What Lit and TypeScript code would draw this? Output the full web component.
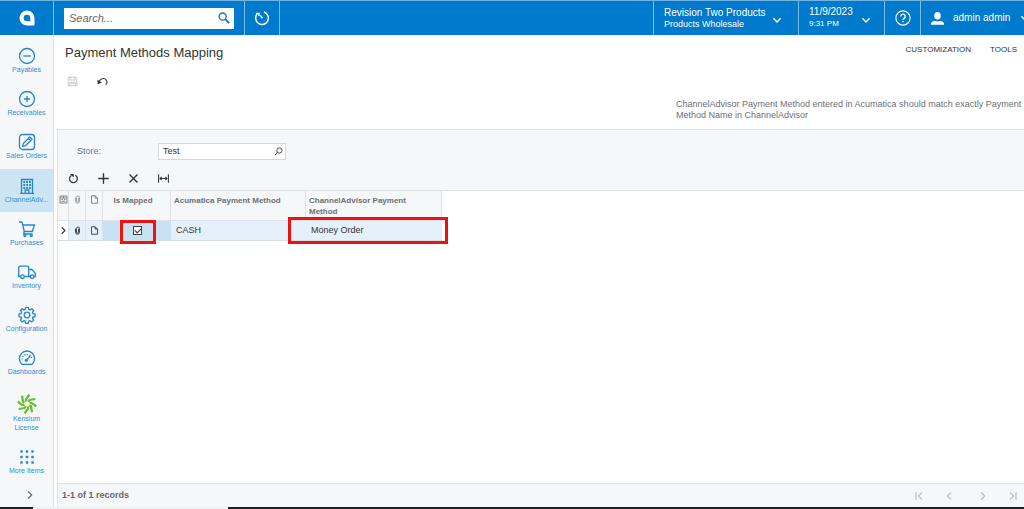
import { LitElement, html, css, svg, TemplateResult } from "lit";
import { customElement, property, state } from "lit/decorators.js";
import { classMap } from "lit/directives/class-map.js";

const shapes: Record<string, TemplateResult> = {
  minus: svg`<circle cx="9" cy="9" r="7.5"/><path d="M5.2 9h7.6"/>`,
  plus: svg`<circle cx="9" cy="9" r="7.5"/><path d="M6 9h6M9 6v6"/>`,
  edit: svg`<rect x="1.5" y="1.5" width="15" height="15" rx="3"/><path d="M4.6 13.4l.8-3 6.4-6.4 2.2 2.2-6.4 6.4zM10.4 5.4l2.2 2.2"/>`,
  building: svg`<path d="M3.5 16V2.5h11V16M2 16.3h14"/><path stroke-width="1.8" d="M5.3 5h1.8M8.2 5H10M11.1 5h1.8M5.3 8h1.8M8.2 8H10M11.1 8h1.8M5.3 11h1.8M8.2 11H10M11.1 11h1.8"/><path d="M7.2 16v-3h3.6v3"/>`,
  cart: svg`<path d="M1 2h3l2.3 9.5h8L16.4 5H4.8"/><path d="M6.3 11.5L5.6 14h9"/><circle cx="6.9" cy="15.6" r="1"/><circle cx="13.3" cy="15.6" r="1"/>`,
  truck: svg`<path d="M2.5 13.5H.7v-9c0-.9.4-1.3 1.3-1.3h7.4c.9 0 1.3.4 1.3 1.3v9H6.5M10.7 6.5h3.1l3.5 3.7v3.3h-1.2M10.7 13.5h1.4"/><circle cx="4.5" cy="13.7" r="1.8"/><circle cx="14.1" cy="13.7" r="1.8"/>`,
  gear: svg`<circle cx="9" cy="9" r="2.8"/><path stroke-linejoin="round" d="M7.7 1.3h2.6l.4 2.1 1.3.5 1.8-1.2 1.8 1.8-1.2 1.8.5 1.3 2.1.4v2.6l-2.1.4-.5 1.3 1.2 1.8-1.8 1.8-1.8-1.2-1.3.5-.4 2.1H7.7l-.4-2.1-1.3-.5-1.8 1.2-1.8-1.8 1.2-1.8-.5-1.3-2.1-.4V8l2.1-.4.5-1.3-1.2-1.8 1.8-1.8 1.8 1.2 1.3-.5z"/>`,
  gauge: svg`<path d="M4 15.3a7.6 7.6 0 1 1 10 0z"/><path d="M8.2 11.5l4.3-5"/><circle cx="8.3" cy="11.3" r="1"/><path stroke-dasharray="1 1.5" d="M4.2 10.5a4.8 4.8 0 0 1 9.6-.5"/>`,
  grid: svg`<g fill="currentColor" stroke="none">${[3.5, 9, 14.5].map((y) => [3.5, 9, 14.5].map((x) => svg`<rect x=${x - 1.2} y=${y - 1.2} width="2.4" height="2.4" rx=".4"/>`))}</g>`,
  right: svg`<path stroke-width="2.2" d="M5.5 2.5L12 9l-6.5 6.5"/>`,
  left: svg`<path stroke-width="2.2" d="M12.5 2.5L6 9l6.5 6.5"/>`,
  down: svg`<path stroke-width="2.6" d="M2.5 6L9 12.5 15.5 6"/>`,
  first: svg`<path stroke-width="2" d="M3.5 2v14M14.5 2.5L8 9l6.5 6.5"/>`,
  last: svg`<path stroke-width="2" d="M14.5 2v14M3.5 2.5L10 9l-6.5 6.5"/>`,
  search: svg`<circle cx="7" cy="6.8" r="5.3" stroke-width="2"/><path stroke-width="2.8" d="M10.8 10.6l6 6"/>`,
  lookup: svg`<circle cx="10.8" cy="7" r="5.3" stroke-width="1.7"/><path stroke-width="2" d="M7 10.8L2 16"/>`,
  timer: svg`<path stroke-width="1.6" d="M11.2 2.2a7.2 7.2 0 1 1-7.6 2.1M2.2 3.8h3.4v3M7 6l2.6 3.2"/>`,
  help: svg`<circle cx="9" cy="9" r="8"/><path stroke-width="1.5" d="M6.5 7.2a2.5 2.5 0 1 1 3.7 2.2C9.3 9.9 9 10.2 9 11.1M9 12.3v1.5"/>`,
  user: svg`<g fill="currentColor" stroke="none"><ellipse cx="9" cy="5.8" rx="3.9" ry="4.5"/><path d="M1 16.5c0-3 2-4.300 5-4.900 1.800 1.200 4.200 1.200 6 0 3 .6 5 1.900 5 4.900z"/></g>`,
  save: svg`<path d="M2 2h12.5L16 3.5V16H2zM5 2v4.500h8V2M4.500 16v-6h9v6M6.500 12.500h5"/>`,
  undo: svg`<path stroke-width="1.7" d="M2.500 10.500C5 3.500 12 2.500 15 6.500c2 2.700 1.200 6-.8 7.800"/><path fill="currentColor" stroke="none" d="M.5 6l.8 7.500L8 10.800z"/>`,
  refresh: svg`<path stroke-width="2" d="M12 3.800a6.400 6.400 0 1 1-6.500.2"/><path fill="currentColor" stroke="none" d="M3 1.500h6.500v6z"/>`,
  add: svg`<path stroke-width="2.2" d="M9 .5v17M.5 9h17"/>`,
  remove: svg`<path stroke-width="2.2" d="M2.500 2.500l13 13M15.500 2.500l-13 13"/>`,
  fit: svg`<path stroke-width="1.7" d="M1 2v14M17 2v14M3.500 9h11M6 6.300L3.300 9 6 11.700M12 6.300L14.700 9 12 11.700"/>`,
  clip: svg`<path stroke-width="1.8" d="M5 5v7.500a4 4 0 0 0 8 0V5a3 3 0 0 0-6 0v7a1.900 1.900 0 0 0 3.900 0V5.500"/>`,
  note: svg`<path stroke-width="1.7" d="M3 1.500h7.500L15 6v10.500H3zM10.300 1.500V6.200H15"/>`,
  settings: svg`<path stroke-width="1.7" d="M2 2h14v14H2zM2 6h14M5 9h3M10 9h3M5 12.500h8M9 2v4"/>`,
};

@customElement("ui-icon")
export class UiIcon extends LitElement {
  @property() name = "";

  static styles = css`
    :host { display: inline-flex; width: 18px; height: 18px; flex: none; }
    .shape { width: 100%; height: 100%; fill: none; stroke: currentColor; stroke-width: 1.3; }
  `;

  render() {
    return html`<svg class="shape" viewBox="0 0 18 18" aria-hidden="true">${shapes[this.name]}</svg>`;
  }
}

@customElement("app-header")
export class AppHeader extends LitElement {
  static styles = css`
    :host { display: block; font: 10px/12px "Liberation Sans", Arial, sans-serif; color: #fff; }
    .bar { display: flex; height: 35px; box-sizing: border-box; background: #007acc; border-top: 1px solid #6fb4e2; }
    .cell { display: flex; align-items: center; box-sizing: border-box; border: 0; border-left: 1px solid #7bbbe5; padding: 0; background: none; color: inherit; font: inherit; text-align: left; }
    .logo { width: 53px; justify-content: center; border-left: 0; }
    .mark { width: 16px; height: 16px; }
    .find { padding: 0 10px; }
    .field { display: flex; align-items: center; width: 170px; height: 21px; background: #fff; color: #1177bd; }
    .text { flex: 1; min-width: 0; border: 0; outline: 0; padding: 0 5px; background: none; font: italic 11px "Liberation Sans", Arial, sans-serif; color: #333; }
    .text::placeholder { color: #666; opacity: 1; }
    .go { display: flex; border: 0; background: none; padding: 0 4px; color: inherit; }
    .go ui-icon { width: 12px; height: 12px; }
    .recent { width: 36px; justify-content: center; border-right: 1px solid #7bbbe5; }
    .recent ui-icon, .help ui-icon { width: 16px; height: 16px; }
    .space { flex: 1; }
    .lines { display: flex; flex-direction: column; }
    .small { font-size: 9px; line-height: 10px; }
    .company { width: 145px; padding-left: 10px; gap: 6px; }
    .date { width: 86px; padding-left: 10px; gap: 8px; }
    .date .small { font-size: 8px; line-height: 12px; }
    .company ui-icon, .date ui-icon { width: 10px; height: 10px; margin-top: 4px; }
    .help { width: 36px; justify-content: center; }
    .account { width: 104px; padding-left: 9px; gap: 8px; overflow: hidden; white-space: nowrap; }
    .account ui-icon { width: 15px; height: 15px; }
    .account .more { width: 10px; height: 10px; margin-left: 2px; }
  `;

  render() {
    return html`
      <header class="bar">
        <div class="cell logo">
          <svg class="mark" viewBox="0 0 16 16" role="img" aria-label="Acumatica">
            <path fill="#fff" fill-rule="evenodd" d="M8 .5A7.5 7.5 0 0 1 15.5 8v7.5H8A7.5 7.5 0 0 1 8 .5zM8 4.700A3.300 3.300 0 1 0 8 11.300h3.300V8A3.300 3.300 0 0 0 8 4.700z"/>
          </svg>
        </div>
        <div class="cell find">
          <div class="field">
            <input class="text" type="search" placeholder="Search..." aria-label="Search" />
            <button class="go" aria-label="Run search"><ui-icon name="search"></ui-icon></button>
          </div>
        </div>
        <button class="cell recent" aria-label="Recently visited"><ui-icon name="timer"></ui-icon></button>
        <div class="space"></div>
        <button class="cell company">
          <span class="lines"><span>Revision Two Products</span><span class="small">Products Wholesale</span></span>
          <ui-icon name="down"></ui-icon>
        </button>
        <button class="cell date">
          <span class="lines"><span>11/9/2023</span><span class="small">9:31 PM</span></span>
          <ui-icon name="down"></ui-icon>
        </button>
        <button class="cell help" aria-label="Help"><ui-icon name="help"></ui-icon></button>
        <button class="cell account">
          <ui-icon name="user"></ui-icon><span>admin admin</span><ui-icon class="more" name="down"></ui-icon>
        </button>
      </header>
    `;
  }
}

@customElement("side-menu")
export class SideMenu extends LitElement {
  @state() private current = "ChannelAdv...";

  private items = [
    ["minus", "Payables"],
    ["plus", "Receivables"],
    ["edit", "Sales Orders"],
    ["building", "ChannelAdv..."],
    ["cart", "Purchases"],
    ["truck", "Inventory"],
    ["gear", "Configuration"],
    ["gauge", "Dashboards"],
    ["kensium", "Kensium License"],
    ["grid", "More Items"],
  ];

  static styles = css`
    :host { display: flex; width: 53px; flex: none; border-right: 1px solid #dcdfe2; background: #f5f7f9; font: 7px/9px "Liberation Sans", Arial, sans-serif; }
    .menu { display: flex; flex-direction: column; flex: 1; min-width: 0; padding-top: 4px; }
    .item { display: flex; flex-direction: column; align-items: center; flex: 1 0 auto; min-height: 43px; box-sizing: border-box; padding: 8px 6px 7px; color: #3190d2; text-decoration: none; text-align: center; }
    .current { background: #cce5f5; }
    .item ui-icon { color: #2586cc; }
    .star { width: 20px; height: 20px; margin-top: 1px; }
    .toggle { display: flex; align-items: center; justify-content: center; height: 24px; border: 0; padding: 0 0 0 6px; background: none; color: #666; }
    .toggle ui-icon { width: 10px; height: 10px; }
  `;

  private glyph(name: string) {
    if (name !== "kensium") return html`<ui-icon name=${name}></ui-icon>`;
    return html`
      <svg class="star" viewBox="-10 -10 20 20" aria-hidden="true">
        ${[0, 45, 90, 135, 180, 225, 270, 315].map(
          (turn) => svg`<path transform="rotate(${turn})" fill="none" stroke="#6cba2d" stroke-width="2.2" stroke-linejoin="round" d="M-.8-2.6L-1.2-4.4L2.3-9.4"/>`,
        )}
      </svg>
    `;
  }

  render() {
    return html`
      <nav class="menu" aria-label="Workspaces">
        ${this.items.map(
          ([icon, label]) => html`
            <a href="#" class=${classMap({ item: true, current: label === this.current })}
              @click=${(e: Event) => { e.preventDefault(); this.current = label; }}>
              ${this.glyph(icon)}<span>${label}</span>
            </a>
          `,
        )}
        <button class="toggle" aria-label="Expand menu"><ui-icon name="right"></ui-icon></button>
      </nav>
    `;
  }
}

@customElement("mapping-grid")
export class MappingGrid extends LitElement {
  @state() private rows = [{ mapped: true, method: "CASH", channel: "Money Order" }];

  static styles = css`
    :host { display: block; flex: 1; font: 9px/11px "Liberation Sans", Arial, sans-serif; color: #333; }
    .grid { border-collapse: separate; border-spacing: 0; table-layout: fixed; width: 384px; }
    .c1 { width: 11px; }
    .c2 { width: 17px; }
    .c3 { width: 68px; }
    .c4 { width: 135px; }
    .c5 { width: 136px; }
    th { height: 30px; box-sizing: border-box; padding: 4px 10px 0 3px; border: solid #dfe2e5; border-width: 0 1px 1px 0; background: #f5f7f9; color: #6d7074; font-size: 8px; line-height: 11px; text-align: left; vertical-align: top; }
    td { position: relative; height: 20px; box-sizing: border-box; padding: 0 5px; background: #e4f1fa; border-bottom: 1px solid #d3dfe8; }
    .icon { padding-left: 0; padding-right: 0; text-align: center; border-right: 1px solid #dfe2e5; line-height: 0; }
    .icon ui-icon { width: 9px; height: 9px; }
    .faint { color: #999; }
    .open { background: #fff; }
    .middle { text-align: center; }
    .active { background: #c8e2f4; }
    .check { appearance: none; display: block; width: 9px; height: 9px; box-sizing: border-box; margin: 0 auto; border: 1px solid #444; background: #fff; }
    .check:checked::before { content: ""; display: block; box-sizing: border-box; width: 6px; height: 4px; margin: 1px 0 0 1px; border: solid #333; border-width: 0 0 1px 1px; transform: rotate(-45deg); }
    .mark { position: absolute; border: 3px solid #ee1111; pointer-events: none; z-index: 1; }
    .tick { inset: -1px 15px -4px 17px; }
    .name { inset: -4px -6px -4px -18px; }
  `;

  render() {
    return html`
      <table class="grid">
        <colgroup><col class="c1" /><col class="c2" /><col class="c2" /><col class="c3" /><col class="c4" /><col class="c5" /></colgroup>
        <thead>
          <tr>
            <th class="icon"><ui-icon name="settings"></ui-icon></th>
            <th class="icon faint"><ui-icon name="clip"></ui-icon></th>
            <th class="icon"><ui-icon name="note"></ui-icon></th>
            <th class="middle">Is Mapped</th>
            <th>Acumatica Payment Method</th>
            <th>ChannelAdvisor Payment Method</th>
          </tr>
        </thead>
        <tbody>
          ${this.rows.map(
            (row) => html`
              <tr>
                <td class="icon open"><ui-icon name="right"></ui-icon></td>
                <td class="icon"><ui-icon name="clip"></ui-icon></td>
                <td class="icon"><ui-icon name="note"></ui-icon></td>
                <td class="active"><input class="check" type="checkbox" aria-label="Is Mapped" .checked=${row.mapped} /><span class="mark tick"></span></td>
                <td>${row.method}</td>
                <td>${row.channel}<span class="mark name"></span></td>
              </tr>
            `,
          )}
        </tbody>
      </table>
    `;
  }
}

@customElement("app-root")
export class AppRoot extends LitElement {
  static styles = css`
    :host { display: flex; flex-direction: column; height: 100vh; overflow: hidden; background: #fff; font: 9px/11px "Liberation Sans", Arial, sans-serif; color: #333; }
    .body { display: flex; flex: 1; min-height: 0; }
    .page { display: flex; flex-direction: column; flex: 1; min-width: 0; padding-left: 3px; }
    .top { display: flex; justify-content: space-between; padding: 9px 7px 0 8px; }
    .title { margin: 0; font-size: 13px; line-height: 17px; font-weight: 400; }
    .links { display: flex; gap: 19px; font-size: 8px; }
    .button { display: flex; align-items: center; border: 0; padding: 0; background: none; font: inherit; color: inherit; }
    .links .button { height: 11px; }
    .tools { display: flex; gap: 19px; padding: 15px 10px 0; }
    .tools ui-icon { width: 11px; height: 11px; }
    .off { color: #bbb; }
    .note { align-self: flex-end; width: 347px; margin: 12px 1px 8px 0; color: #6d7074; }
    .panel { display: flex; flex-direction: column; flex: 1; border: solid #dfe2e5; border-width: 1px 0 0 1px; }
    .filter { background: #f5f7f9; border-bottom: 1px solid #dfe2e5; }
    .store { display: flex; align-items: center; padding: 13px 19px 0; }
    .label { width: 81px; color: #777; }
    .lookup { display: flex; align-items: center; width: 128px; height: 17px; box-sizing: border-box; border: 1px solid #d5d8db; background: #fff; }
    .value { flex: 1; min-width: 0; border: 0; outline: 0; padding: 0 4px; background: none; font: inherit; color: #333; }
    .lookup .button { padding: 0 2px; }
    .lookup ui-icon { width: 9px; height: 9px; }
    .actions { display: flex; gap: 19px; padding: 13px 10px 6px; }
    .actions ui-icon { width: 11px; height: 11px; }
    .foot { display: flex; align-items: center; justify-content: space-between; height: 24px; box-sizing: border-box; padding: 0 6px 0 4px; border-top: 1px solid #dfe2e5; background: #f5f7f9; font-weight: 700; color: #666; }
    .pager, .pair { display: flex; gap: 20px; color: #bbb; }
    .pager { gap: 24px; }
    .pager ui-icon { width: 10px; height: 10px; }
    .strip { display: flex; height: 2px; background: #1b1e23; }
    .thumb { width: 195px; margin-left: 33px; background: #f0f0f0; }
  `;

  private buttons(list: string[][]) {
    return list.map(
      ([icon, label]) => html`<button class="button" aria-label=${label}><ui-icon name=${icon}></ui-icon></button>`,
    );
  }

  render() {
    return html`
      <app-header></app-header>
      <div class="body">
        <side-menu></side-menu>
        <main class="page">
          <div class="top">
            <h1 class="title">Payment Methods Mapping</h1>
            <div class="links"><button class="button">CUSTOMIZATION</button><button class="button">TOOLS</button></div>
          </div>
          <div class="tools">
            <button class="button off" aria-label="Save"><ui-icon name="save"></ui-icon></button>
            <button class="button" aria-label="Undo"><ui-icon name="undo"></ui-icon></button>
          </div>
          <p class="note">ChannelAdvisor Payment Method entered in Acumatica should match exactly Payment Method Name in ChannelAdvisor</p>
          <section class="panel">
            <div class="filter">
              <div class="store">
                <label class="label" for="store">Store:</label>
                <div class="lookup">
                  <input class="value" id="store" type="text" value="Test" />
                  <button class="button" aria-label="Select store"><ui-icon name="lookup"></ui-icon></button>
                </div>
              </div>
              <div class="actions">
                ${this.buttons([["refresh", "Refresh"], ["add", "Add row"], ["remove", "Delete row"], ["fit", "Fit to screen"]])}
              </div>
            </div>
            <mapping-grid></mapping-grid>
            <div class="foot">
              <span>1-1 of 1 records</span>
              <div class="pager">
                <div class="pair">${this.buttons([["first", "First page"], ["left", "Previous page"]])}</div>
                <div class="pair">${this.buttons([["right", "Next page"], ["last", "Last page"]])}</div>
              </div>
            </div>
          </section>
        </main>
      </div>
      <div class="strip"><div class="thumb"></div></div>
    `;
  }
}
